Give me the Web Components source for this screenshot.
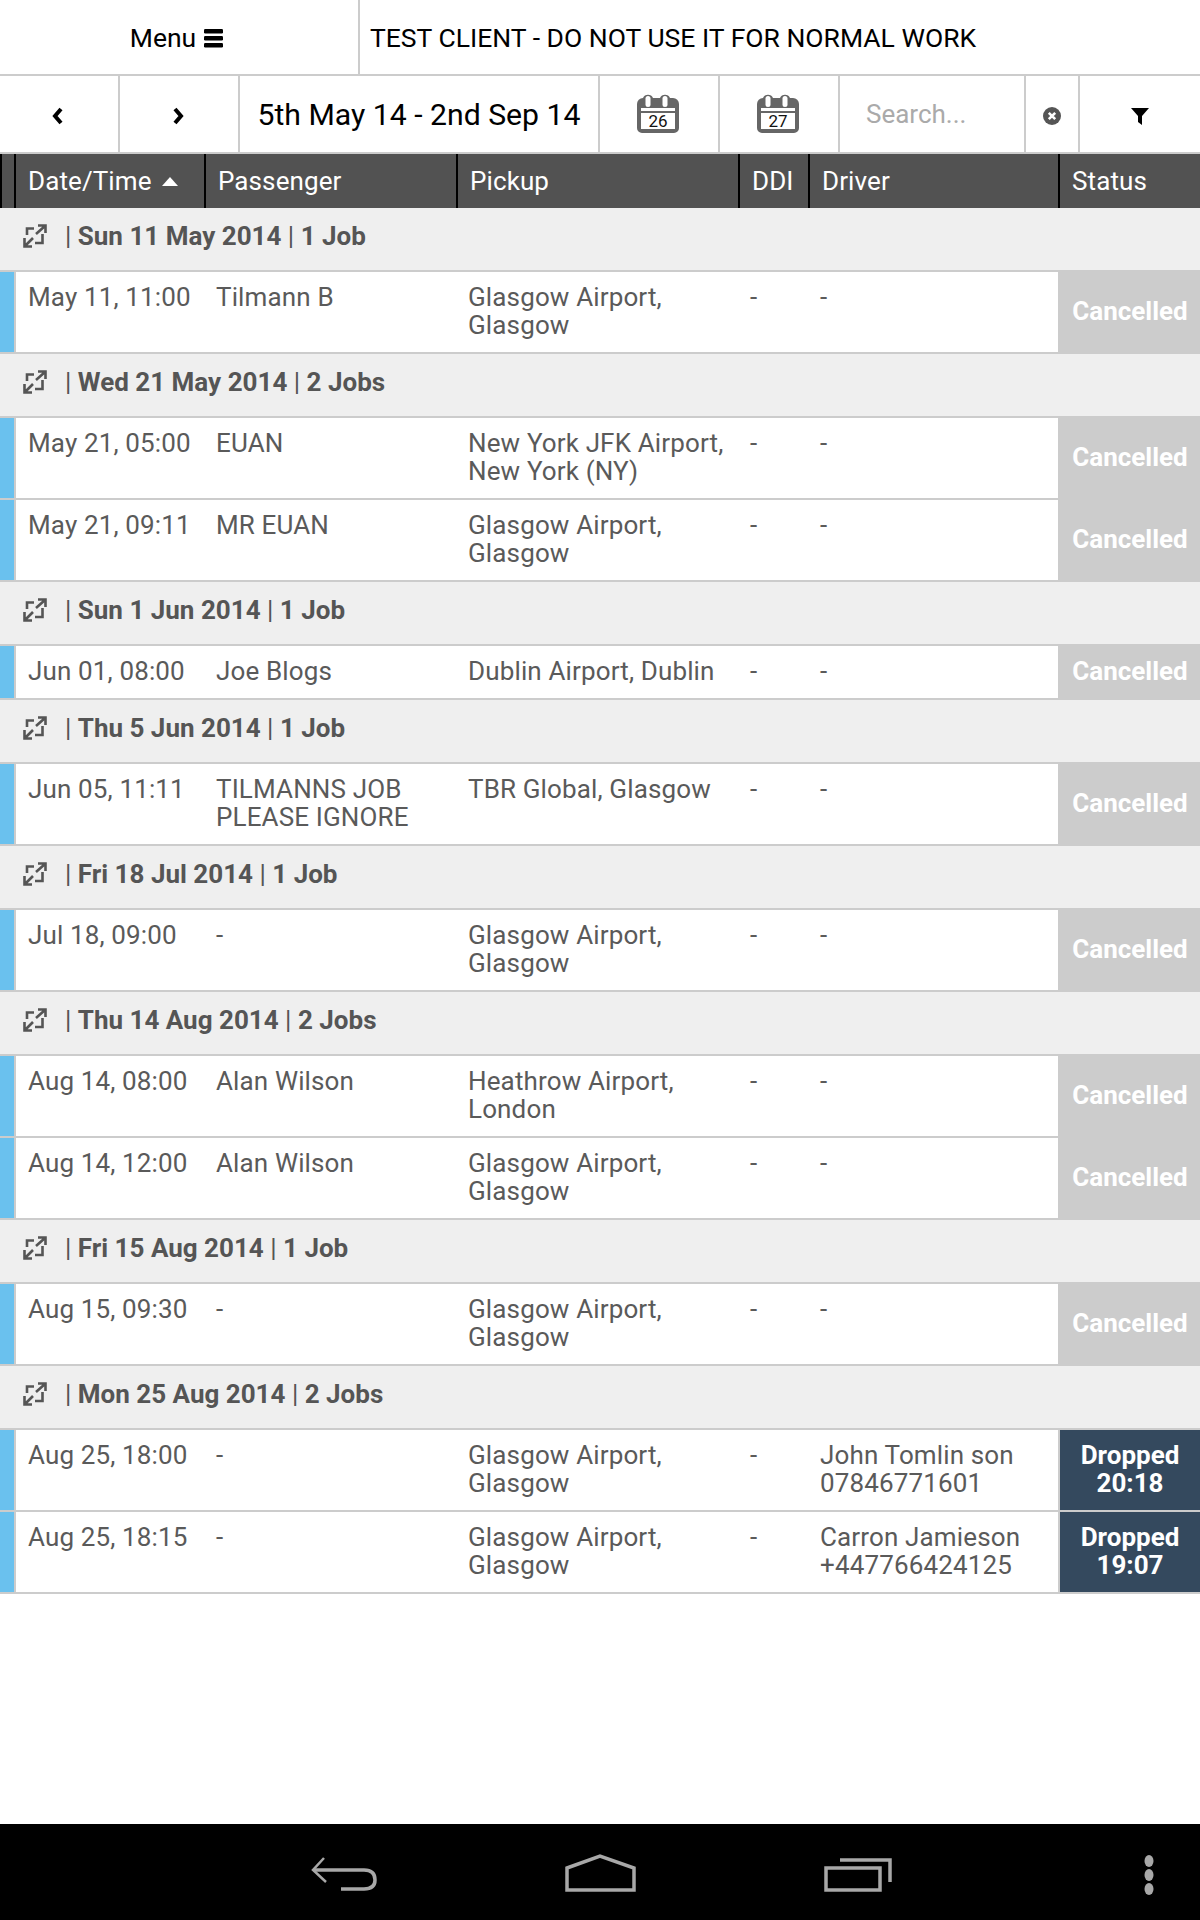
<!DOCTYPE html>
<html>
<head>
<meta charset="utf-8">
<title>Jobs</title>
<style>
  html, body { margin: 0; padding: 0; background: #fff; }
  body {
    font-family: Roboto, "Liberation Sans", sans-serif;
    --cols: 14px 190px 252px 282px 70px 250px 142px;
    display: flex;
    flex-direction: column;
    height: 1920px;
    overflow: hidden;
  }
  job-list { flex: 1; }
</style>
</head>
<body>
<top-bar>TEST CLIENT - DO NOT USE IT FOR NORMAL WORK</top-bar>
<tool-bar range="5th May 14 - 2nd Sep 14"></tool-bar>
<table-head></table-head>
<job-list>
  <job-group label="Sun 11 May 2014" count="1 Job"></job-group>
  <job-row date="May 11, 11:00" passenger="Tilmann B" pickup="Glasgow Airport, Glasgow" status="Cancelled"></job-row>
  <job-group label="Wed 21 May 2014" count="2 Jobs"></job-group>
  <job-row date="May 21, 05:00" passenger="EUAN" pickup="New York JFK Airport, New York (NY)" status="Cancelled"></job-row>
  <job-row date="May 21, 09:11" passenger="MR EUAN" pickup="Glasgow Airport, Glasgow" status="Cancelled"></job-row>
  <job-group label="Sun 1 Jun 2014" count="1 Job"></job-group>
  <job-row date="Jun 01, 08:00" passenger="Joe Blogs" pickup="Dublin Airport, Dublin" status="Cancelled"></job-row>
  <job-group label="Thu 5 Jun 2014" count="1 Job"></job-group>
  <job-row date="Jun 05, 11:11" passenger="TILMANNS JOB PLEASE IGNORE" pickup="TBR Global, Glasgow" status="Cancelled"></job-row>
  <job-group label="Fri 18 Jul 2014" count="1 Job"></job-group>
  <job-row date="Jul 18, 09:00" passenger="-" pickup="Glasgow Airport, Glasgow" status="Cancelled"></job-row>
  <job-group label="Thu 14 Aug 2014" count="2 Jobs"></job-group>
  <job-row date="Aug 14, 08:00" passenger="Alan Wilson" pickup="Heathrow Airport, London" status="Cancelled"></job-row>
  <job-row date="Aug 14, 12:00" passenger="Alan Wilson" pickup="Glasgow Airport, Glasgow" status="Cancelled"></job-row>
  <job-group label="Fri 15 Aug 2014" count="1 Job"></job-group>
  <job-row date="Aug 15, 09:30" passenger="-" pickup="Glasgow Airport, Glasgow" status="Cancelled"></job-row>
  <job-group label="Mon 25 Aug 2014" count="2 Jobs"></job-group>
  <job-row date="Aug 25, 18:00" passenger="-" pickup="Glasgow Airport, Glasgow" driver="John Tomlin son 07846771601" status="Dropped 20:18" done></job-row>
  <job-row date="Aug 25, 18:15" passenger="-" pickup="Glasgow Airport, Glasgow" driver="Carron Jamieson +447766424125" status="Dropped 19:07" done></job-row>
</job-list>
<nav-bar></nav-bar>

<script>
class TopBar extends HTMLElement {
  constructor() {
    super()
    this.attachShadow({ mode: 'open' })
    this.shadowRoot.innerHTML = `
      <style>
        :host { display: flex; height: 74px; border-bottom: 2px solid #ccc; color: #000; font-size: 26.5px; flex: none; }
        .menu { width: 360px; border-right: 2px solid #ccc; display: flex; align-items: center; justify-content: center; gap: 8px; padding: 1px 4px 0 0; box-sizing: border-box; }
        .title { display: flex; align-items: center; padding-left: 10px; padding-top: 1px; }
        svg { display: block; }
      </style>
      <div class="menu">Menu
        <svg width="20" height="20" viewBox="0 0 20 20"><g fill="#000"><rect x="0" y="1" width="19" height="4.4" rx="1.2"/><rect x="0" y="8" width="19" height="4.4" rx="1.2"/><rect x="0" y="15" width="19" height="4.4" rx="1.2"/></g></svg>
      </div>
      <div class="title"><slot></slot></div>`
  }
}
customElements.define('top-bar', TopBar)

class ToolBar extends HTMLElement {
  constructor() {
    super()
    this.attachShadow({ mode: 'open' })
  }

  calendar(day) {
    return `<svg width="42" height="40" viewBox="0 0 42 40" style="margin:0 2px 2px 0">
      <path d="M6 5 a5.500 5.500 0 0 1 10 0 h7 a5.500 5.500 0 0 1 10 0 h3 a6 6 0 0 1 6 6 v24 a5 5 0 0 1 -5 5 h-32 a5 5 0 0 1 -5 -5 v-24 a6 6 0 0 1 6 -6 z" fill="#666"/>
      <rect x="8.500" y="3" width="5" height="11" rx="2.500" fill="#fff"/>
      <rect x="25.500" y="3" width="5" height="11" rx="2.500" fill="#fff"/>
      <rect x="4" y="15" width="34" height="3" fill="#fff"/>
      <rect x="4" y="20" width="34" height="16" fill="#fff"/>
      <text x="21" y="34" font-family="Roboto, sans-serif" font-size="17" fill="#111" text-anchor="middle">${day}</text>
    </svg>`
  }

  connectedCallback() {
    this.shadowRoot.innerHTML = `
      <style>
        :host { display: flex; height: 76px; border-bottom: 2px solid #ccc; flex: none; }
        .cell { display: flex; align-items: center; justify-content: center; border-right: 2px solid #ccc; box-sizing: border-box; }
        .btn { width: 120px; }
        .range { width: 360px; font-size: 30.2px; color: #000; }
        .search { width: 186px; justify-content: flex-start; padding-left: 26px; font-size: 26px; color: #aaa; }
        .clear { width: 54px; }
        .filter { flex: 1; border-right: 0; }
        svg { display: block; }
      </style>
      <div class="cell btn"><svg width="14" height="18" viewBox="0 0 14 18" style="margin:4px 2px 0 0"><path d="M10 2 L4 9 L10 16" fill="none" stroke="#000" stroke-width="4"/></svg></div>
      <div class="cell btn"><svg width="14" height="18" viewBox="0 0 14 18" style="margin:4px 2px 0 0"><path d="M4 2 L10 9 L4 16" fill="none" stroke="#000" stroke-width="4"/></svg></div>
      <div class="cell range">${this.getAttribute('range')}</div>
      <div class="cell btn">${this.calendar(26)}</div>
      <div class="cell btn">${this.calendar(27)}</div>
      <div class="cell search">Search...</div>
      <div class="cell clear"><svg width="18" height="18" viewBox="0 0 18 18" style="margin-top:4px"><circle cx="9" cy="9" r="9" fill="#555"/><path d="M5.8 5.8 L12.2 12.2 M12.2 5.8 L5.8 12.2" stroke="#fff" stroke-width="2.6"/></svg></div>
      <div class="cell filter"><svg width="18" height="18" viewBox="0 0 18 18" style="margin-top:4px"><path d="M0 1 H18 L11 9 V18 L7 15 V9 Z" fill="#000"/></svg></div>`
  }
}
customElements.define('tool-bar', ToolBar)

class TableHead extends HTMLElement {
  constructor() {
    super()
    this.attachShadow({ mode: 'open' })
    this.shadowRoot.innerHTML = `
      <style>
        :host { display: grid; grid-template-columns: var(--cols); height: 54px; background: #525252; color: #fff; font-size: 26px; letter-spacing: .1px; flex: none; }
        div { border-left: 2px solid #000; padding-left: 12px; display: flex; align-items: center; gap: 10px; white-space: nowrap; box-sizing: border-box; }
        div:first-child { border: 0; padding: 0; }
        svg { display: block; }
      </style>
      <div></div>
      <div>Date/Time <svg width="16" height="9" viewBox="0 0 16 9"><path d="M8 0 L16 9 H0 Z" fill="#fff"/></svg></div>
      <div>Passenger</div>
      <div>Pickup</div>
      <div>DDI</div>
      <div>Driver</div>
      <div>Status</div>`
  }
}
customElements.define('table-head', TableHead)

class JobList extends HTMLElement {
  constructor() {
    super()
    this.attachShadow({ mode: 'open' })
    this.shadowRoot.innerHTML = `<style>:host { display: block; }</style><slot></slot>`
  }
}
customElements.define('job-list', JobList)

class JobGroup extends HTMLElement {
  constructor() {
    super()
    this.attachShadow({ mode: 'open' })
  }

  connectedCallback() {
    this.shadowRoot.innerHTML = `
      <style>
        :host { display: flex; align-items: center; height: 55px; padding-bottom: 7px; border-bottom: 2px solid #ccc; background: #efefef; color: #555; font-size: 26px; padding-left: 23px; }
        svg { display: block; margin-right: 18px; }
        b { font-weight: 700; }
      </style>
      <svg width="24" height="24" viewBox="0 0 24 24">
        <g fill="none" stroke="#555" stroke-width="2.6">
          <path d="M15 1.500 H22.500 V9 M22 2 L13 10"/>
          <path d="M1.500 14 V22.500 H9 M2 22 L10 14"/>
          <path d="M4 11 V4.500 H11 M19.500 10 V19 H12"/>
        </g>
      </svg>
      <span>|&nbsp;</span><b>${this.getAttribute('label')}</b><span>&nbsp;|&nbsp;</span><b>${this.getAttribute('count')}</b>`
  }
}
customElements.define('job-group', JobGroup)

class JobRow extends HTMLElement {
  constructor() {
    super()
    this.attachShadow({ mode: 'open' })
  }

  connectedCallback() {
    const get = (name) => this.getAttribute(name) || '-'
    this.shadowRoot.innerHTML = `
      <style>
        :host { display: grid; grid-template-columns: var(--cols); border-bottom: 2px solid #ccc; color: #5a5a5a; font-size: 26px; line-height: 28px; letter-spacing: .14px; }
        .stripe { background: #6ac1ee; }
        .cell { padding: 11px 10px 13px 12px; min-width: 0; }
        .cell.first { border-left: 2px solid #ccc; padding-left: 12px; }
        .status { background: #ccc; color: #fff; font-weight: 700; text-align: center; letter-spacing: 0; display: flex; align-items: center; justify-content: center; padding: 0 14px 2px; border-left: 2px solid #ccc; }
        :host([done]) .status { background: #34495e; }
      </style>
      <div class="stripe"></div>
      <div class="cell first">${get('date')}</div>
      <div class="cell">${get('passenger')}</div>
      <div class="cell">${get('pickup')}</div>
      <div class="cell">${get('ddi')}</div>
      <div class="cell">${get('driver')}</div>
      <div class="status">${get('status')}</div>`
  }
}
customElements.define('job-row', JobRow)

class NavBar extends HTMLElement {
  constructor() {
    super()
    this.attachShadow({ mode: 'open' })
    this.shadowRoot.innerHTML = `
      <style>
        :host { display: block; height: 96px; background: #000; flex: none; }
        svg { display: block; }
      </style>
      <svg width="1200" height="96" viewBox="0 0 1200 96" fill="none" stroke="#a8a8a8" stroke-width="3.500">
        <path d="M324 34 L313 46 L326 58" stroke-width="2.500"/>
        <path d="M314 46 H364 Q375 46 375 56 Q375 65 364 65 H341" stroke-width="3.500"/>
        <path d="M567 44 L600 32 L634 44 V66 H567 Z"/>
        <path d="M826 44 H880 V66 H826 Z"/>
        <path d="M840 36 H890 V58"/>
        <g fill="#a8a8a8" stroke="none">
          <ellipse cx="1149" cy="37" rx="4.500" ry="6"/>
          <ellipse cx="1149" cy="51" rx="4.500" ry="6"/>
          <ellipse cx="1149" cy="65" rx="4.500" ry="6"/>
        </g>
      </svg>`
  }
}
customElements.define('nav-bar', NavBar)
</script>
</body>
</html>
